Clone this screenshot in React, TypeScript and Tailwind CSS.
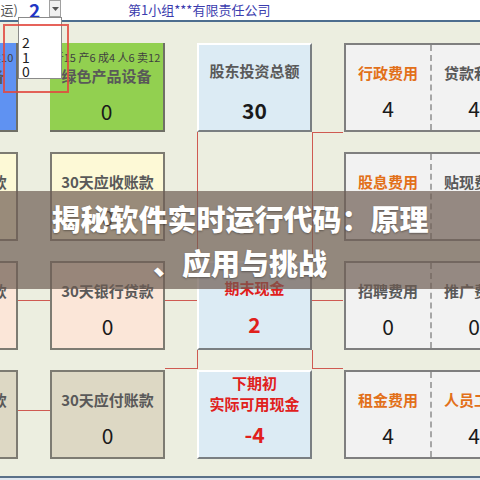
const FONT = '"Noto Sans CJK SC", "Noto Sans", sans-serif';

type Tone = 'gray' | 'orange' | 'red';

const toneClass: Record<Tone, string> = {
  gray: 'text-[#595959]',
  orange: 'text-[#e2701a]',
  red: 'text-[#e0201c]',
};

function SideCard({ bg, label, value, small, shadowOnly }: { bg: string; label: string; value?: string; small?: string; shadowOnly?: boolean }) {
  return (
    <div
      className={`relative flex flex-col items-center h-[89px] ${bg} ${
        shadowOnly ? 'border-r-2 border-b-2 border-[#6f6f66]' : 'border-2 border-[#7d7b72]'
      } ${small ? 'pt-[6px]' : 'pt-[17px]'}`}
    >
      {small && <div className="text-[11px] leading-[16px] text-[#3f3f3f] whitespace-nowrap">{small}</div>}
      <div className="text-[15px] leading-[22px] font-bold text-[#595959] whitespace-nowrap">{label}</div>
      {value && <div className="mt-[12px] text-[21px] leading-[24px] text-[#1a1a1a]">{value}</div>}
    </div>
  );
}

function CenterCard({ lines, value, tone, top, gap }: { lines: string[]; value: string; tone: Tone; top: number; gap: number }) {
  return (
    <div
      className="relative flex flex-col items-center h-[89px] bg-[#dcebf4] border-t-2 border-l-2 border-white border-r-2 border-b-2 border-r-[#7a7f82] border-b-[#7a7f82]"
      style={{ paddingTop: top }}
    >
      {lines.map((l) => (
        <div key={l} className={`text-[15px] leading-[21px] font-bold whitespace-nowrap ${toneClass[tone]}`}>
          {l}
        </div>
      ))}
      <div
        className={`text-[21px] leading-[24px] font-bold ${tone === 'red' ? 'text-[#e0201c]' : 'text-[#1a1a1a]'}`}
        style={{ marginTop: gap }}
      >
        {value}
      </div>
    </div>
  );
}

type Cost = { label: string; value?: string; tone: Tone };

function CostPair({ a, b }: { a: Cost; b: Cost }) {
  return (
    <div className="relative flex h-[89px] bg-[#f2f2f2] border-2 border-[#7f7f7f]">
      {[a, b].map((c, i) => (
        <div
          key={i}
          className={`flex-1 flex flex-col items-center pt-[17px] ${i === 0 ? 'border-r-2 border-dashed border-[#a6a6a6]' : ''}`}
        >
          <div className={`text-[15px] leading-[22px] font-bold whitespace-nowrap ${toneClass[c.tone]}`}>{c.label}</div>
          {c.value && <div className="mt-[12px] text-[21px] leading-[24px] text-[#1a1a1a]">{c.value}</div>}
        </div>
      ))}
    </div>
  );
}

export default function App() {
  return (
    <div className="relative w-[480px] h-[480px] overflow-hidden bg-[#eceee0]" style={{ fontFamily: FONT }}>
      {/* header row */}
      <div className="relative z-20 h-[22px] bg-white border-b-2 border-[#4d6d8e] flex items-center">
        <div className="w-[18px] overflow-hidden flex justify-end text-[13px] text-[#555] whitespace-nowrap">运)</div>
        <div className="w-[31px] pl-[11px] text-[19px] leading-[20px] font-bold text-[#1f35c4]">2</div>
        <div className="self-start w-[12px] h-[17px] bg-[#f0f0f0] border border-[#a0a0a0] flex items-center justify-center">
          <svg width="7" height="4" viewBox="0 0 7 4">
            <path d="M0 0h7L3.5 4z" fill="#555" />
          </svg>
        </div>
        <div className="ml-[67px] text-[13px] text-[#3b3cae] whitespace-nowrap">第1小组***有限责任公司</div>
      </div>

      {/* connector lines */}
      <svg className="absolute left-0 top-0 z-0" width="480" height="480">
        <g stroke="#cf5a52" strokeWidth="1" fill="none">
          <path d="M197.5 132V261M312.5 132V261M312 132.5H343" />
          <path d="M18 300.5H50M165 300.5H197M312 300.5H343" />
          <path d="M197.5 300V369M312.5 350V369M165 368.5H197M312 368.5H343" />
          <path d="M18 410.5H50" />
        </g>
      </svg>

      {/* board */}
      <div className="relative z-10 ml-[-97px] mt-[21px] grid grid-cols-[115px_115px_115px_174px] gap-x-[32px] gap-y-[20px]">
        <SideCard bg="bg-[#5f92f2]" small="折10 产6 成4 人6 卖10" label="蓝色产品设备" shadowOnly />
        <SideCard bg="bg-[#92d050]" small="折15 产6 成4 人6 卖12" label="绿色产品设备" value="0" shadowOnly />
        <CenterCard lines={['股东投资总额']} value="30" tone="gray" top={15} gap={17} />
        <CostPair a={{ label: '行政费用', value: '4', tone: 'orange' }} b={{ label: '贷款利息', value: '4', tone: 'gray' }} />

        <SideCard bg="bg-[#fdf9d6]" label="60天应收账款" value="0" />
        <SideCard bg="bg-[#fdf9d6]" label="30天应收账款" value="0" />
        <div />
        <CostPair a={{ label: '股息费用', tone: 'orange' }} b={{ label: '贴现费用', tone: 'gray' }} />

        <SideCard bg="bg-[#fbe6d8]" label="60天银行贷款" value="0" />
        <SideCard bg="bg-[#fbe6d8]" label="30天银行贷款" value="0" />
        <CenterCard lines={['期末现金']} value="2" tone="red" top={14} gap={14} />
        <CostPair a={{ label: '招聘费用', value: '0', tone: 'gray' }} b={{ label: '推广费用', value: '0', tone: 'gray' }} />

        <SideCard bg="bg-[#ddd8c4]" label="60天应付账款" value="0" />
        <SideCard bg="bg-[#ddd8c4]" label="30天应付账款" value="0" />
        <CenterCard lines={['下期初', '实际可用现金']} value="-4" tone="red" top={0} gap={8} />
        <CostPair a={{ label: '租金费用', value: '4', tone: 'orange' }} b={{ label: '人员工资', value: '4', tone: 'orange' }} />
      </div>

      {/* bottom edge */}
      <div className="absolute left-0 bottom-0 w-full h-[4px] border-t-2 border-[#5a7088] bg-[#dfe6ee]" />

      {/* open dropdown */}
      <div className="absolute z-30 left-[18px] top-[17px] w-[44px] h-[62px] bg-white border border-[#8a8a8a] pl-[3px] pt-[17px] text-[14px] leading-[14.5px] text-[#222]">
        <div>2</div>
        <div>1</div>
        <div>0</div>
      </div>
      <div className="absolute z-30 left-[3px] top-[24px] w-[66px] h-[69px] border-2 border-[#e2483e] opacity-85" />

      {/* title banner */}
      <div className="absolute z-40 left-0 top-[191px] w-full h-[98px] bg-[rgba(110,92,82,0.7)] flex flex-col items-center justify-center">
        <div className="text-[29px] leading-[44px] font-black text-white whitespace-nowrap [text-shadow:0_1px_2px_rgba(0,0,0,0.35)]">
          揭秘软件实时运行代码：原理
        </div>
        <div className="text-[29px] leading-[44px] font-black text-white whitespace-nowrap [text-shadow:0_1px_2px_rgba(0,0,0,0.35)]">
          、应用与挑战
        </div>
      </div>
    </div>
  );
}
